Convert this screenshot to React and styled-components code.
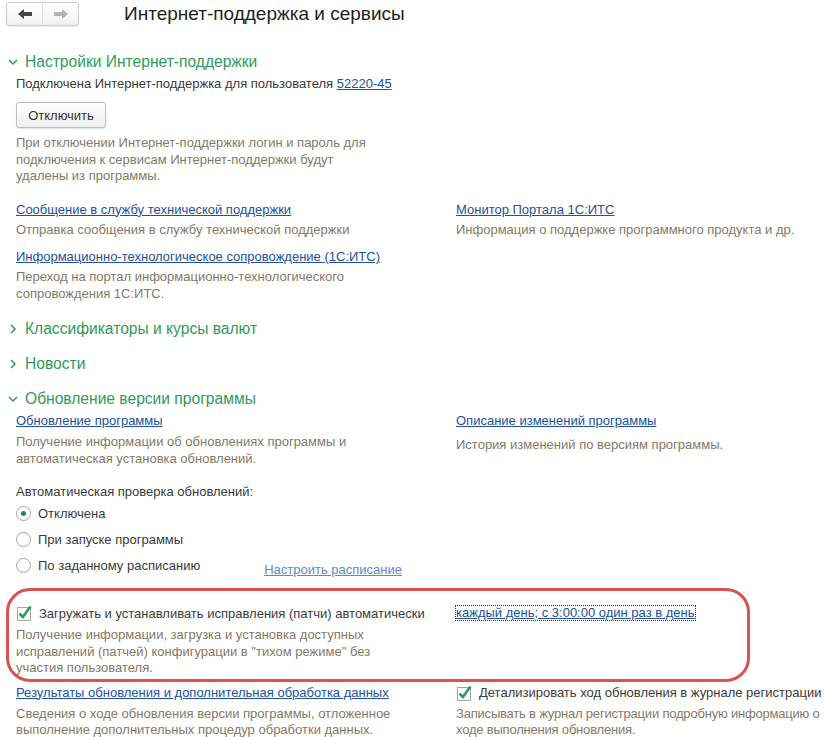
import React from "react";
import styled, { createGlobalStyle } from "styled-components";

const GlobalStyle = createGlobalStyle`
  body {
    margin: 0;
    background: #fff;
    font-family: "Liberation Sans", Arial, sans-serif;
    color: #3a3a3a;
  }
`;

const Page = styled.div`
  width: 825px;
  height: 737px;
  overflow: hidden;
  background: #fff;
`;

const TopBar = styled.div`
  display: flex;
  align-items: center;
  height: 26px;
  padding-left: 6px;
`;

const NavGroup = styled.div`
  display: flex;
  height: 22px;
  margin-top: 2px;
  border: 1px solid #cdcdcd;
  border-radius: 3px;
  background: linear-gradient(#ffffff, #f1f1f1);
  box-shadow: 0 1px 1px rgba(0, 0, 0, 0.08);
`;

const NavButton = styled.div`
  width: 35px;
  display: flex;
  align-items: center;
  justify-content: center;
  & + & {
    border-left: 1px solid #dcdcdc;
  }
`;

const Title = styled.div`
  margin-left: 45px;
  margin-top: 2px;
  font-size: 19px;
  color: #1e1e1e;
`;

const Body = styled.div`
  padding-left: 16px;
`;

const SectionHeader = styled.div`
  display: flex;
  align-items: center;
  height: 20px;
  margin-left: -8px;
  margin-top: ${(p) => p.$mt || 15}px;
  font-size: 15.6px;
  color: #2f9a5a;
  gap: 7px;
`;

const Line = styled.div`
  font-size: 13px;
  line-height: 16px;
  margin-top: ${(p) => p.$mt || 0}px;
  color: #3a3a3a;
`;

const Link = styled.a`
  font-size: 13px;
  color: ${(p) => (p.$light ? "#5b8ac7" : "#22509b")};
  text-decoration: underline;
  cursor: pointer;
`;

const LinkLine = styled.div`
  font-size: 13px;
  line-height: 16px;
  margin-top: ${(p) => p.$mt || 0}px;
`;

const Desc = styled.div`
  font-size: 13px;
  line-height: 16.5px;
  color: #857865;
  margin-top: ${(p) => p.$mt || 0}px;
  max-width: ${(p) => p.$w || 400}px;
  letter-spacing: ${(p) => (p.$tight ? "-0.2px" : "normal")};
`;

const Button = styled.div`
  display: inline-flex;
  align-items: center;
  justify-content: center;
  width: 88px;
  height: 24px;
  margin-top: 10px;
  border: 1px solid #bdbdbd;
  border-radius: 3px;
  background: linear-gradient(#ffffff, #eeeeee);
  box-shadow: 0 1px 1px rgba(0, 0, 0, 0.12);
  font-size: 13px;
  color: #333;
`;

const TwoCols = styled.div`
  display: grid;
  grid-template-columns: 440px 1fr;
  margin-top: ${(p) => p.$mt || 0}px;
`;

const Col = styled.div`
  display: flex;
  flex-direction: column;
`;

const RadioRow = styled.div`
  display: flex;
  align-items: center;
  height: 26px;
  font-size: 13px;
  color: #3a3a3a;
  gap: 7px;
`;

const RadioCircle = styled.span`
  width: 13px;
  height: 13px;
  border: 1px solid #a3a3a3;
  border-radius: 50%;
  background: #fff;
  display: flex;
  align-items: center;
  justify-content: center;
  box-sizing: content-box;
  &::after {
    content: "";
    display: ${(p) => (p.$on ? "block" : "none")};
    width: 5px;
    height: 5px;
    border-radius: 50%;
    background: #238d4f;
  }
`;

const ScheduleLink = styled.span`
  margin-left: 57px;
  margin-top: 8px;
`;

const CheckRow = styled.div`
  display: flex;
  align-items: center;
  height: 16px;
  gap: 7px;
  font-size: 13px;
  color: #3a3a3a;
`;

const PatchWrap = styled.div`
  position: relative;
  margin-top: 27px;
`;

const Frame = styled.div`
  position: absolute;
  left: -10px;
  top: -17px;
  width: 744px;
  height: 94px;
  box-sizing: border-box;
  border: 3px solid #d9534f;
  border-radius: 24px;
  pointer-events: none;
`;

const FocusLink = styled.span`
  display: inline-block;
  outline: 1px dotted #333;
  line-height: 14px;
  margin-top: 1px;
`;

const ArrowLeft = ({ color }) => (
  <svg width="14" height="10" viewBox="0 0 14 10">
    <path d="M0 5 L6 0 L6 3 L14 3 L14 7 L6 7 L6 10 Z" fill={color} />
  </svg>
);

const ArrowRight = ({ color }) => (
  <svg width="14" height="10" viewBox="0 0 14 10">
    <path d="M14 5 L8 0 L8 3 L0 3 L0 7 L8 7 L8 10 Z" fill={color} />
  </svg>
);

const Chevron = ({ open }) => (
  <svg width="10" height="10" viewBox="0 0 10 10">
    {open ? (
      <path d="M1 3 L5 7 L9 3" fill="none" stroke="#2f9a5a" strokeWidth="1.5" />
    ) : (
      <path d="M3 1 L7 5 L3 9" fill="none" stroke="#2f9a5a" strokeWidth="1.5" />
    )}
  </svg>
);

const CheckBox = () => (
  <svg width="16" height="16" viewBox="0 0 16 16" style={{ overflow: "visible" }}>
    <rect x="1.5" y="2.5" width="13" height="13" fill="#fff" stroke="#a3a3a3" />
    <path d="M3.5 8.5 L6.8 12 L14.5 1.5" fill="none" stroke="#2a9a56" strokeWidth="2.6" />
  </svg>
);

export default function App() {
  return (
    <Page>
      <GlobalStyle />
      <TopBar>
        <NavGroup>
          <NavButton>
            <ArrowLeft color="#444" />
          </NavButton>
          <NavButton>
            <ArrowRight color="#b3b3b3" />
          </NavButton>
        </NavGroup>
        <Title>Интернет-поддержка и сервисы</Title>
      </TopBar>

      <Body>
        <SectionHeader $mt={26}>
          <Chevron open />
          Настройки Интернет-поддержки
        </SectionHeader>
        <Line $mt={4}>
          Подключена Интернет-поддержка для пользователя <Link>52220-45</Link>
        </Line>
        <Button>Отключить</Button>
        <Desc $mt={7} $w={350}>
          При отключении Интернет-поддержки логин и пароль для подключения к
          сервисам Интернет-поддержки будут удалены из программы.
        </Desc>

        <TwoCols $mt={17}>
          <Col>
            <LinkLine>
              <Link>Сообщение в службу технической поддержки</Link>
            </LinkLine>
            <Desc $mt={4}>Отправка сообщения в службу технической поддержки</Desc>
            <LinkLine $mt={11}>
              <Link>Информационно-технологическое сопровождение (1С:ИТС)</Link>
            </LinkLine>
            <Desc $mt={4} $w={340}>
              Переход на портал информационно-технологического сопровождения
              1С:ИТС.
            </Desc>
          </Col>
          <Col>
            <LinkLine>
              <Link>Монитор Портала 1С:ИТС</Link>
            </LinkLine>
            <Desc $mt={4} $w={360}>
              Информация о поддержке программного продукта и др.
            </Desc>
          </Col>
        </TwoCols>

        <SectionHeader $mt={17}>
          <Chevron />
          Классификаторы и курсы валют
        </SectionHeader>
        <SectionHeader>
          <Chevron />
          Новости
        </SectionHeader>
        <SectionHeader>
          <Chevron open />
          Обновление версии программы
        </SectionHeader>

        <TwoCols $mt={4}>
          <Col>
            <LinkLine>
              <Link>Обновление программы</Link>
            </LinkLine>
            <Desc $mt={5} $w={340}>
              Получение информации об обновлениях программы и автоматическая
              установка обновлений.
            </Desc>
          </Col>
          <Col>
            <LinkLine>
              <Link>Описание изменений программы</Link>
            </LinkLine>
            <Desc $mt={8}>История изменений по версиям программы.</Desc>
          </Col>
        </TwoCols>

        <Line $mt={17}>Автоматическая проверка обновлений:</Line>
        <Col>
          <RadioRow>
            <RadioCircle $on />
            Отключена
          </RadioRow>
          <RadioRow>
            <RadioCircle />
            При запуске программы
          </RadioRow>
          <RadioRow>
            <RadioCircle />
            По заданному расписанию
            <ScheduleLink>
              <Link $light>Настроить расписание</Link>
            </ScheduleLink>
          </RadioRow>
        </Col>

        <PatchWrap>
          <Frame />
          <TwoCols>
            <Col>
              <CheckRow>
                <CheckBox />
                Загружать и устанавливать исправления (патчи) автоматически
              </CheckRow>
              <Desc $mt={6} $w={360}>
                Получение информации, загрузка и установка доступных
                исправлений (патчей) конфигурации в "тихом режиме" без участия
                пользователя.
              </Desc>
            </Col>
            <Col>
              <LinkLine>
                <FocusLink>
                  <Link>каждый день; с 3:00:00 один раз в день</Link>
                </FocusLink>
              </LinkLine>
            </Col>
          </TwoCols>
        </PatchWrap>

        <TwoCols $mt={8}>
          <Col>
            <LinkLine>
              <Link>Результаты обновления и дополнительная обработка данных</Link>
            </LinkLine>
            <Desc $mt={5} $w={410}>
              Сведения о ходе обновления версии программы, отложенное
              выполнение дополнительных процедур обработки данных.
            </Desc>
          </Col>
          <Col>
            <CheckRow>
              <CheckBox />
              Детализировать ход обновления в журнале регистрации
            </CheckRow>
            <Desc $mt={5} $w={370} $tight>
              Записывать в журнал регистрации подробную информацию о ходе
              выполнения обновления.
            </Desc>
          </Col>
        </TwoCols>
      </Body>
    </Page>
  );
}
